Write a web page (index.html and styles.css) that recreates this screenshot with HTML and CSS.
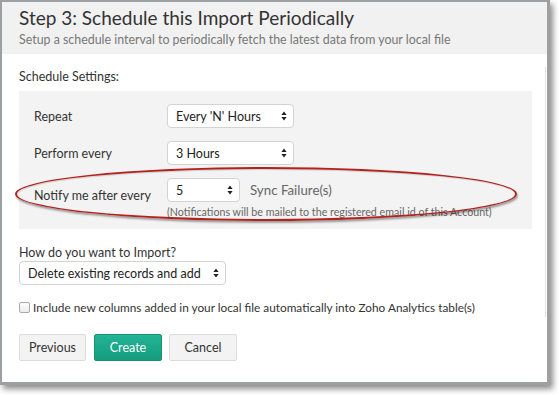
FILE: index.html
```html
<!DOCTYPE html>
<html>
<head>
<meta charset="utf-8">
<link rel="stylesheet" href="styles.css">
</head>
<body>
<div class="window">
  <div class="header">
    <h1 class="title">Step 3:&nbsp;Schedule this Import Periodically</h1>
    <p class="subtitle">Setup a schedule interval to periodically fetch the latest data from your local file</p>
  </div>
  <div class="content">
    <div class="section-label">Schedule Settings:</div>
    <div class="panel">
      <div class="row">
        <div class="label">Repeat</div>
        <div class="select w-md"><span>Every 'N' Hours</span><span class="arrows"><svg width="6" height="10" viewBox="0 0 6 10"><path d="M3 0.5 L5.6 4 H0.4 Z M3 9.5 L5.6 6 H0.4 Z" fill="#222"/></svg></span></div>
      </div>
      <div class="row">
        <div class="label">Perform every</div>
        <div class="select w-md"><span>3 Hours</span><span class="arrows"><svg width="6" height="10" viewBox="0 0 6 10"><path d="M3 0.5 L5.6 4 H0.4 Z M3 9.5 L5.6 6 H0.4 Z" fill="#222"/></svg></span></div>
      </div>
      <div class="row notify">
        <div class="label">Notify me after every</div>
        <div class="notify-col">
          <div class="notify-line">
            <div class="select w-sm"><span>5</span><span class="arrows"><svg width="6" height="10" viewBox="0 0 6 10"><path d="M3 0.5 L5.6 4 H0.4 Z M3 9.5 L5.6 6 H0.4 Z" fill="#222"/></svg></span></div>
            <span class="muted">Sync Failure(s)</span>
          </div>
          <div class="note">(Notifications will be mailed to the registered email id of this Account)</div>
        </div>
      </div>
      <div class="ellipse"></div>
    </div>
    <div class="section-label import-label">How do you want to Import?</div>
    <div class="select w-lg"><span>Delete existing records and add</span><span class="arrows"><svg width="6" height="10" viewBox="0 0 6 10"><path d="M3 0.5 L5.6 4 H0.4 Z M3 9.5 L5.6 6 H0.4 Z" fill="#222"/></svg></span></div>
    <label class="check-row"><span class="checkbox"></span><span>Include new columns added in your local file automatically into Zoho Analytics table(s)</span></label>
    <div class="buttons">
      <button class="btn">Previous</button>
      <button class="btn primary">Create</button>
      <button class="btn">Cancel</button>
    </div>
  </div>
  <div class="scrolltrack"></div>
</div>
</body>
</html>
```
FILE: styles.css
```css
html, body {
  margin: 0;
  padding: 0;
  background: #ffffff;
}
body {
  font-family: Lato, "Open Sans", "Liberation Sans", sans-serif;
  color: #333;
  width: 559px;
  height: 395px;
  overflow: hidden;
}
.window {
  position: relative;
  box-sizing: border-box;
  width: 550px;
  height: 385px;
  border: 3px solid #9da0a3;
  border-top-width: 2px;
  border-left-width: 2px;
  background: #fff;
  box-shadow: 3px 4px 6px rgba(0,0,0,0.45);
}
.header {
  background: #f1f1f1;
  padding: 4px 16px 0 17px;
  height: 52px;
  box-sizing: border-box;
}
.title {
  margin: 0;
  font-size: 19px;
  font-weight: 400;
  color: #333;
  line-height: 24px;
}
.subtitle {
  margin: 3px 0 0;
  font-size: 12.4px;
  color: #777;
  line-height: 14px;
}
.content {
  padding: 15px 15px 0 17px;
}
.section-label {
  font-size: 12.5px;
  color: #333;
  line-height: 16px;
}
.panel {
  position: relative;
  margin-top: 6px;
  background: #f3f3f3;
  padding: 13px 15px 11px 15px;
  display: flex;
  flex-direction: column;
  gap: 13px;
}
.row {
  display: flex;
  align-items: center;
}
.row.notify {
  align-items: flex-start;
}
.row.notify .label {
  margin-top: 10px;
}
.label {
  width: 133px;
  font-size: 12.5px;
  line-height: 15px;
  color: #333;
  flex: none;
}
.select {
  box-sizing: border-box;
  height: 24px;
  background: #fff;
  border: 1px solid #d3d3d3;
  border-radius: 4px;
  display: flex;
  align-items: center;
  justify-content: space-between;
  padding: 0 6px 0 8px;
  font-size: 12.5px;
  color: #222;
}
.arrows {
  display: flex;
  align-items: center;
}
.w-md { width: 127px; }
.w-sm { width: 73px; }
.w-lg { width: 207px; }
.notify-col {
  display: flex;
  flex-direction: column;
}
.notify-line {
  display: flex;
  align-items: center;
  gap: 10px;
}
.muted {
  font-size: 13.3px;
  color: #666;
}
.note {
  margin-top: 3px;
  font-size: 10.7px;
  line-height: 13px;
  color: #666;
  white-space: nowrap;
}
.ellipse {
  position: absolute;
  left: -4px;
  top: 76px;
  width: 502px;
  height: 54px;
  border: 2px solid #b3231e;
  border-radius: 50%;
  box-sizing: border-box;
  box-shadow: 1px 2px 2px rgba(0,0,0,0.35), inset 1px 1px 1px rgba(0,0,0,0.15);
  pointer-events: none;
}
.import-label {
  margin-top: 16px;
}
.check-row {
  display: flex;
  align-items: center;
  gap: 3px;
  margin-top: 15px;
  font-size: 11.8px;
  line-height: 15px;
  color: #333;
}
.checkbox {
  width: 9px;
  height: 9px;
  border: 1px solid #a9a9a9;
  border-radius: 2px;
  background: linear-gradient(#fff, #ececec);
  flex: none;
}
.buttons {
  display: flex;
  gap: 8px;
  margin-top: 19px;
}
.btn {
  box-sizing: border-box;
  width: 67px;
  height: 27px;
  padding: 0;
  text-align: center;
  font-family: Lato, "Open Sans", "Liberation Sans", sans-serif;
  font-size: 12.5px;
  color: #333;
  background: #f3f3f3;
  border: 1px solid #dcdcdc;
  border-radius: 2px;
}
.btn.primary {
  width: 68px;
  color: #fff;
  background: linear-gradient(#22b495, #159c7d);
  border-color: #139477;
}
.btn.primary + .btn {
  width: 68px;
  margin-left: -1px;
}
.scrolltrack {
  position: absolute;
  right: 1px;
  top: 65px;
  width: 1px;
  height: 250px;
  background: #e2e2e2;
}
```
